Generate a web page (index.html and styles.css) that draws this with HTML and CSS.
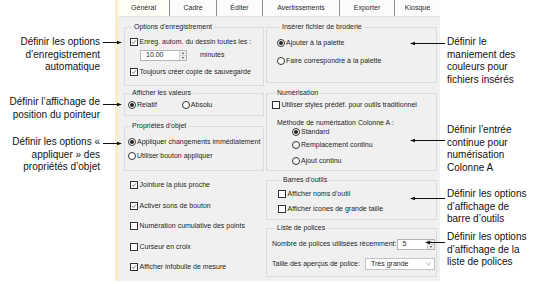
FILE: index.html
```html
<!DOCTYPE html>
<html lang="fr">
<head>
<meta charset="utf-8">
<title>Options</title>
<link rel="stylesheet" href="styles.css">
</head>
<body>
<div class="page">
  <div class="dialog">
    <div class="tabs">
      <div class="tab active t-gen">Général</div>
      <div class="tab t-cad">Cadre</div>
      <div class="tab t-edi">Éditer</div>
      <div class="tab t-ave">Avertissements</div>
      <div class="tab t-exp">Exporter</div>
      <div class="tab t-kio last">Kiosque</div>
    </div>
    <div class="sheet">
      <div class="col col-left">
        <div class="group gl1">
          <span class="legend">Options d'enregistrement</span>
          <div class="row m7"><span class="cb on"><svg viewBox="0 0 8 8"><path d="M1.3 4.1 L3.1 5.9 L6.6 1.9"/></svg></span>Enreg. autom. du dessin toutes les :</div>
          <div class="row spin-row">
            <span class="spin w47"><span class="spin-val">10.00</span><span class="spin-btns"><span class="up"></span><span class="down"></span></span></span>
            <span class="unit">minutes</span>
          </div>
          <div class="row m7h"><span class="cb on"><svg viewBox="0 0 8 8"><path d="M1.3 4.1 L3.1 5.9 L6.6 1.9"/></svg></span>Toujours créer copie de sauvegarde</div>
        </div>
        <div class="group gl2">
          <span class="legend">Afficher les valeurs</span>
          <div class="row m4"><span class="rb on"></span>Relatif<span class="rb gap-abs"></span>Absolu</div>
        </div>
        <div class="group gl3">
          <span class="legend">Propriétés d'objet</span>
          <div class="row m8"><span class="rb on"></span>Appliquer changements immédiatement</div>
          <div class="row m6"><span class="rb"></span>Utiliser bouton appliquer</div>
        </div>
        <div class="checklist">
          <div class="row"><span class="cb on"><svg viewBox="0 0 8 8"><path d="M1.3 4.1 L3.1 5.9 L6.6 1.9"/></svg></span>Jointure la plus proche</div>
          <div class="row"><span class="cb on"><svg viewBox="0 0 8 8"><path d="M1.3 4.1 L3.1 5.9 L6.6 1.9"/></svg></span>Activer sons de bouton</div>
          <div class="row"><span class="cb"></span>Numération cumulative des points</div>
          <div class="row"><span class="cb"></span>Curseur en croix</div>
          <div class="row"><span class="cb on"><svg viewBox="0 0 8 8"><path d="M1.3 4.1 L3.1 5.9 L6.6 1.9"/></svg></span>Afficher infobulle de mesure</div>
        </div>
      </div>
      <div class="col col-right">
        <div class="group gr1">
          <span class="legend">Insérer fichier de broderie</span>
          <div class="row m8"><span class="rb on"></span>Ajouter à la palette</div>
          <div class="row m10"><span class="rb"></span>Faire correspondre à la palette</div>
        </div>
        <div class="group gr2">
          <span class="legend">Numérisation</span>
          <div class="row m4"><span class="cb"></span>Utiliser styles prédéf. pour outils traditionnel</div>
          <div class="row m10 ind5">Méthode de numérisation Colonne A :</div>
          <div class="row m1 ind20"><span class="rb on"></span>Standard</div>
          <div class="row m5 ind20"><span class="rb"></span>Remplacement continu</div>
          <div class="row m8 ind20"><span class="rb"></span>Ajout continu</div>
        </div>
        <div class="group gr3">
          <span class="legend">Barres d'outils</span>
          <div class="row m6"><span class="cb"></span>Afficher noms d'outil</div>
          <div class="row m7"><span class="cb"></span>Afficher icones de grande taille</div>
        </div>
        <div class="group gr4">
          <span class="legend">Liste de polices</span>
          <div class="row field-row f1">
            <span>Nombre de polices utilisées récemment:</span>
            <span class="spin w42"><span class="spin-val">5</span><span class="spin-btns"><span class="up"></span><span class="down"></span></span></span>
          </div>
          <div class="row field-row f2">
            <span>Taille des aperçus de police:</span>
            <span class="select"><span class="spin-val">Très grande</span><svg class="chev" viewBox="0 0 6 4"><path d="M0.5 0.8 L3 3.2 L5.5 0.8"/></svg></span>
          </div>
        </div>
      </div>
    </div>
  </div>

  <div class="note left n1">Définir les options<br>d’enregistrement<br>automatique</div>
  <div class="note left n2">Définir l’affichage de<br>position du pointeur</div>
  <div class="note left n3">Définir les options «<br>appliquer » des<br>propriétés d’objet</div>
  <div class="note right n4">Définir le<br>maniement des<br>couleurs pour<br>fichiers insérés</div>
  <div class="note right n5">Définir l’entrée<br>continue pour<br>numérisation<br>Colonne A</div>
  <div class="note right n6">Définir les options<br>d’affichage de<br>barre d’outils</div>
  <div class="note right n7">Définir les options<br>d’affichage de la<br>liste de polices</div>

  <svg class="arrow ar-r a1" viewBox="0 0 19 5"><line x1="0" y1="2.5" x2="15" y2="2.5"/><polygon points="14,0.8 19,2.5 14,4.2"/></svg>
  <svg class="arrow ar-r a2" viewBox="0 0 19 5"><line x1="0" y1="2.5" x2="15" y2="2.5"/><polygon points="14,0.8 19,2.5 14,4.2"/></svg>
  <svg class="arrow ar-r a3" viewBox="0 0 19 5"><line x1="0" y1="2.5" x2="15" y2="2.5"/><polygon points="14,0.8 19,2.5 14,4.2"/></svg>
  <svg class="arrow ar-l a4" viewBox="0 0 35 5"><polygon points="5,0.8 0,2.5 5,4.2"/><line x1="4" y1="2.5" x2="35" y2="2.5"/></svg>
  <svg class="arrow ar-l a5" viewBox="0 0 35 5"><polygon points="5,0.8 0,2.5 5,4.2"/><line x1="4" y1="2.5" x2="35" y2="2.5"/></svg>
  <svg class="arrow ar-l a6" viewBox="0 0 35 5"><polygon points="5,0.8 0,2.5 5,4.2"/><line x1="4" y1="2.5" x2="35" y2="2.5"/></svg>
  <svg class="arrow ar-s a7" viewBox="0 0 20 5"><polygon points="5,0.8 0,2.5 5,4.2"/><line x1="4" y1="2.5" x2="20" y2="2.5"/></svg>
</div>
</body>
</html>
```

FILE: styles.css
```css
* { box-sizing: border-box; margin: 0; padding: 0; }

body {
  margin: 0;
  width: 540px;
  height: 284px;
  overflow: hidden;
  background: #ffffff;
  font-family: "Liberation Sans", Arial, sans-serif;
  color: #000;
}

.page {
  position: relative;
  display: flex;
  width: 540px;
  height: 284px;
  padding-left: 115px;
}

/* ---------- dialog ---------- */
.dialog {
  width: 325px;
  height: 281px;
  border-left: 3px solid #fbefc9;
  display: flex;
  flex-direction: column;
  font-size: 7px;
  line-height: 8px;
  color: #262626;
}

.tabs {
  display: flex;
  height: 17px;
  background: #fbfbfb;
  border-bottom: 1px solid #e3e3e3;
}

.tab {
  display: flex;
  align-items: center;
  justify-content: center;
  height: 16px;
  border-right: 1px solid #8f8f8f;
  color: #2a2a2a;
}
.tab.last { border-right: none; }
.tab.active { background: #fffdf6; }
.t-gen { width: 52px; }
.t-cad { width: 47px; }
.t-edi { width: 46px; }
.t-ave { width: 77px; }
.t-exp { width: 55px; }
.t-kio { width: 45px; }

.sheet {
  flex: 1;
  display: flex;
  gap: 2px;
  padding: 0 3px 0 6px;
  background: #f0f0f0;
}

.col { display: flex; flex-direction: column; }
.col-left { width: 140px; }
.col-right { width: 171px; }

.group {
  border: 1px solid #dcdcdc;
  display: flex;
  flex-direction: column;
}

.legend {
  display: block;
  width: max-content;
  margin-top: -5px;
  margin-left: 3px;
  padding: 0 2px;
  height: 8px;
  background: #f0f0f0;
}

.gl1 { margin-top: 10px; height: 59px; padding-left: 5px; }
.gl2 { margin-top: 7px; height: 23px; padding-left: 3px; }
.gl3 { margin-top: 10px; height: 45px; padding-left: 3px; }

.gr1 { margin-top: 10px; height: 56px; padding-left: 10px; }
.gr2 { margin-top: 10px; height: 78px; padding-left: 5px; }
.gr3 { margin-top: 9px; height: 40px; padding-left: 11px; }
.gr4 { margin-top: 8px; height: 49px; padding-left: 5px; padding-right: 1px; }

.gl1 .legend, .gl2 .legend, .gl3 .legend { margin-left: 2px; }

.row {
  display: flex;
  align-items: center;
  height: 8px;
  white-space: nowrap;
}

.m1 { margin-top: 1px; }
.m4 { margin-top: 4px; }
.m5 { margin-top: 5px; }
.m6 { margin-top: 6px; }
.m7 { margin-top: 7px; }
.m7h { margin-top: 7.5px; }
.m8 { margin-top: 8px; }
.m10 { margin-top: 10px; }
.ind5 { padding-left: 5px; }
.ind20 { padding-left: 20px; }

.checklist {
  display: flex;
  flex-direction: column;
  gap: 12.5px;
  margin-top: 10px;
  padding-left: 6px;
}

/* checkbox */
.cb {
  width: 8px;
  height: 8px;
  flex: none;
  border: 1px solid #333;
  background: #fff;
  margin-right: 1.5px;
  display: flex;
}
.cb svg { width: 6px; height: 6px; }
.cb path { fill: none; stroke: #333; stroke-width: 0.9; }

/* radio */
.rb {
  width: 8px;
  height: 8px;
  flex: none;
  border: 1px solid #333;
  border-radius: 50%;
  background: #fff;
  margin-right: 1px;
  display: flex;
  align-items: center;
  justify-content: center;
}
.rb.on::after {
  content: "";
  width: 4px;
  height: 4px;
  border-radius: 50%;
  background: #222;
}
.gap-abs { margin-left: 25px; }

/* spin */
.spin-row { height: 11px; margin-top: 3.5px; padding-left: 10px; }
.spin {
  display: flex;
  align-items: center;
  height: 11px;
  border: 1px solid #b5b5b5;
  background: #fff;
}
.w47 { width: 47px; }
.w42 { width: 42px; margin-left: auto; }
.spin-val { flex: 1; padding-left: 5px; }
.spin-btns {
  display: flex;
  flex-direction: column;
  width: 7px;
  height: 9px;
  border-left: 1px solid #d0d0d0;
}
.spin-btns .up, .spin-btns .down {
  flex: 1;
  display: flex;
  align-items: center;
  justify-content: center;
  background: #ececec;
}
.spin-btns .up { border-bottom: 1px solid #d0d0d0; }
.spin-btns .up::after {
  content: "";
  border-left: 1.5px solid transparent;
  border-right: 1.5px solid transparent;
  border-bottom: 2px solid #444;
}
.spin-btns .down::after {
  content: "";
  border-left: 1.5px solid transparent;
  border-right: 1.5px solid transparent;
  border-top: 2px solid #444;
}
.unit { margin-left: 13px; }

.field-row { height: 11px; }
.f1 { margin-top: 6.5px; }
.f2 { margin-top: 8.5px; height: 12px; }

.select {
  display: flex;
  align-items: center;
  width: 70px;
  height: 12px;
  margin-left: auto;
  border: 1px solid #c4c4c4;
  background: #fff;
}
.chev { width: 5px; height: 4px; margin-right: 3px; }
.chev path { fill: none; stroke: #777; stroke-width: 0.8; }

/* ---------- callouts ---------- */
.note {
  position: absolute;
  font-size: 10px;
  line-height: 12.7px;
  color: #111;
  white-space: nowrap;
}
.note.left { left: 0; width: 100px; text-align: right; }
.note.right { left: 447px; }
.n1 { top: 36px; }
.n2 { top: 96px; }
.n3 { top: 136px; }
.n4 { top: 36px; }
.n5 { top: 124px; }
.n6 { top: 188px; }
.n7 { top: 231px; }

.arrow { position: absolute; height: 5px; }
.arrow line { stroke: #111; stroke-width: 1; }
.arrow polygon { fill: #111; }
.ar-r { width: 19px; left: 103px; }
.ar-l { width: 35px; left: 410px; }
.ar-s { width: 20px; left: 425px; }
.a1 { top: 40px; }
.a2 { top: 102px; }
.a3 { top: 140.5px; }
.a4 { top: 41px; }
.a5 { top: 138px; }
.a6 { top: 196px; }
.a7 { top: 240px; }
```
